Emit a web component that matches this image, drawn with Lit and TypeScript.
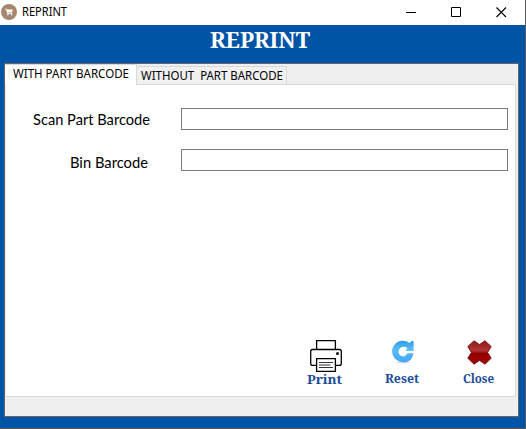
import { LitElement, html, css, svg } from "lit";
import { customElement, property } from "lit/decorators.js";

/** A single line of text set to an exact width. */
@customElement("fit-text")
class FitText extends LitElement {
  @property() text = "";
  @property({ type: Number }) width = 0;
  @property({ type: Number }) height = 20;
  @property({ type: Number }) base = 15;

  static styles = css`
    :host { display: block; flex: none; }
    svg { display: block; overflow: visible; }
    text { fill: currentColor; white-space: pre; }
  `;

  render() {
    return html`<svg width=${this.width} height=${this.height}>
      ${svg`<text x="0" y=${this.base} textLength=${this.width} lengthAdjust="spacingAndGlyphs">${this.text}</text>`}
    </svg>`;
  }
}

@customElement("app-root")
class AppRoot extends LitElement {
  static styles = css`
    :host {
      display: flex;
      flex-direction: column;
      box-sizing: border-box;
      width: 526px;
      height: 429px;
      overflow: hidden;
      background: #0054a6;
      border-right: 1px solid #5c5c5c;
      border-bottom: 1px solid #5c5c5c;
      color: #000;
    }
    svg { display: block; flex: none; }
    .titlebar {
      display: flex;
      flex: none;
      height: 25px;
      background: #fff;
      padding-left: 1px;
    }
    .app-icon { margin-top: 4px; }
    .window-name {
      margin: 3px 0 0 5px;
      font: 12px "Noto Sans", sans-serif;
    }
    .controls { display: flex; margin-left: auto; padding: 7px 18px 0 0; gap: 34px; }
    .heading {
      display: flex;
      flex: none;
      height: 38px;
      padding-left: 210px;
      color: #fff;
      font: bold 22px "Noto Serif", "DejaVu Serif", serif;
    }
    .panel {
      display: flex;
      flex-direction: column;
      flex: none;
      box-sizing: border-box;
      width: 515px;
      height: 354px;
      margin-left: 4px;
      background: #efefef;
      border: 1px solid #646464;
    }
    .tabs { display: flex; align-items: flex-end; height: 20px; flex: none; }
    .tab {
      box-sizing: border-box;
      height: 18px;
      border: 1px solid #d9d9d9;
      border-width: 1px 1px 0 0;
      padding: 0 0 0 4px;
      font: 12px "Noto Sans", sans-serif;
      width: 150px;
      background: #f0f0f0;
    }
    .tab.active {
      width: 132px;
      height: 21px;
      margin-bottom: -1px;
      padding-left: 8px;
      background: #fff;
      position: relative;
    }
    .page {
      box-sizing: border-box;
      display: flex;
      flex-direction: column;
      width: 511px;
      height: 313px;
      background: #fff;
      border: 1px solid #d9d9d9;
      border-left-color: #e8e8e8;
    }
    .row { display: flex; height: 22px; flex: none; }
    .row.first { margin-top: 23px; }
    .row.second { margin-top: 19px; }
    .label {
      display: flex;
      justify-content: flex-end;
      width: 175px;
      box-sizing: border-box;
      font: 15px Lato, "Noto Sans", sans-serif;
    }
    .first .label { padding-right: 31px; }
    .second .label { padding-right: 33px; }
    .field {
      box-sizing: border-box;
      width: 327px;
      height: 22px;
      padding: 0 4px;
      border: 1px solid #7a7a7a;
      border-radius: 0;
      background: #fff;
      outline: none;
    }
    .actions {
      display: flex;
      margin: auto 20px 9px 301px;
      justify-content: space-between;
      color: #1c4b99;
      font: bold 12px "Noto Serif", "DejaVu Serif", serif;
    }
    .action { display: flex; flex-direction: column; align-items: center; height: 47px; }
    .print { font-size: 13px; }
    .print svg { margin-left: 3px; }
    .caption { margin-top: auto; }
    .action:not(.print) .caption { margin-right: 1px; }
  `;

  private cart() {
    return html`<svg class="app-icon" width="16" height="16" viewBox="0 0 16 16">
      <circle cx="8" cy="8" r="8" fill="#a58770" />
      <path d="M4.2 5.2h1.4l.9 4.3h4.8" fill="none" stroke="#fff" stroke-width=".9" />
      <path d="M5.5 5.6h6.3l-.7 2.9H6.2z" fill="#fff" />
      <circle cx="6.9" cy="10.8" r=".75" fill="#fff" /><circle cx="10.7" cy="10.8" r=".75" fill="#fff" />
    </svg>`;
  }

  private printer() {
    return html`<svg width="32" height="32" viewBox="0 0 32 32" fill="none" stroke="#000" stroke-width="1.3">
      <path d="M6.6 9.5V.7h18.8v8.8" />
      <path d="M6.3 25.4H2.6q-1.9 0-1.9-1.9V11.4q0-1.9 1.9-1.9h26.8q1.9 0 1.9 1.9v12.1q0 1.9-1.9 1.9h-3.7" />
      <path d="M6.6 18.6h18.8v12.7H6.6z" />
      <path d="M9 22.5h14M9 25h11.5M9 27.5h14" stroke="#333" stroke-width="1.1" />
      <circle cx="27.5" cy="13.5" r="1.5" fill="#000" stroke="none" />
    </svg>`;
  }

  private reset() {
    return html`<svg width="24" height="24" viewBox="0 0 24 24">
      <defs><linearGradient id="b" x1="0" y1="0" x2="0" y2="1">
        <stop offset="0" stop-color="#2c9ae4" /><stop offset=".4" stop-color="#5cbdf5" /><stop offset="1" stop-color="#3fa6fb" />
      </linearGradient></defs>
      <ellipse cx="12" cy="22.6" rx="7" ry="1" fill="#ddd" />
      <path d="M18.6 3 20.6 1.2Q22.6 0 22.6 2.2V11H12.8L15.6 8.2Q13 6.8 10.6 8.1 8 9.7 8.4 12.4 9.2 15.6 12.2 15.8 14.6 15.7 15.8 13.2H22.4Q21.8 19.6 16.2 21.7 8.8 23.6 3.8 18.6-.2 13.6 1.6 8 4.2 1.8 10.6.8 15.2.5 18.6 3z" fill="url(#b)" />
      <path d="M15.6 8.2Q12.8 6.6 10.4 8.1 7.6 10.2 8.4 13.1 9.6 16 12.6 15.7 15 15.2 15.8 12.8M22.6 12.1H12.4l3.4-3.6" fill="none" stroke="#fff" stroke-width="1.4" />
    </svg>`;
  }

  private cross() {
    return html`<svg width="25" height="25" viewBox="0 0 25 25">
      <defs><linearGradient id="r" x1="0" y1="0" x2="0" y2="1">
        <stop offset="0" stop-color="#8f1c1c" /><stop offset=".42" stop-color="#b03634" /><stop offset=".54" stop-color="#940000" /><stop offset="1" stop-color="#9b0705" />
      </linearGradient></defs>
      <path d="M7 .8 12.5 4.6 18 .8 24.2 6.6 20.6 12.4 24.2 18.2 18 24.2 12.5 20.4 7 24.2.8 18.2 4.4 12.4.8 6.6z" fill="url(#r)" stroke="#7f1717" stroke-width="1" stroke-linejoin="round" />
    </svg>`;
  }

  render() {
    return html`
      <div class="titlebar">
        ${this.cart()}
        <fit-text class="window-name" text="REPRINT" width="45" base="13"></fit-text>
        <div class="controls">
          <svg width="11" height="11"><path d="M0 5.5h10" stroke="#000" /></svg>
          <svg width="11" height="11"><path d="M.5.5h9v9h-9z" fill="none" stroke="#000" /></svg>
          <svg width="11" height="11"><path d="M.5.5l9.5 9.5M10 .5.5 10" stroke="#000" stroke-width="1.1" /></svg>
        </div>
      </div>
      <div class="heading"><fit-text text="REPRINT" width="100" height="30" base="23"></fit-text></div>
      <div class="panel">
        <div class="tabs">
          <div class="tab active"><fit-text text="WITH PART BARCODE" width="116" height="18" base="13"></fit-text></div>
          <div class="tab"><fit-text text="WITHOUT&nbsp; PART BARCODE" width="142" height="16" base="13"></fit-text></div>
        </div>
        <div class="page">
          <div class="row first">
            <div class="label"><fit-text text="Scan Part Barcode" width="117" base="16.5"></fit-text></div>
            <input class="field" />
          </div>
          <div class="row second">
            <div class="label"><fit-text text="Bin Barcode" width="78" base="18.5"></fit-text></div>
            <input class="field" />
          </div>
          <div class="actions">
            <div class="action print">${this.printer()}<fit-text class="caption" text="Print" width="35" height="14" base="11"></fit-text></div>
            <div class="action">${this.reset()}<fit-text class="caption" text="Reset" width="34" height="14" base="10"></fit-text></div>
            <div class="action">${this.cross()}<fit-text class="caption" text="Close" width="31" height="14" base="10"></fit-text></div>
          </div>
        </div>
      </div>
    `;
  }
}
